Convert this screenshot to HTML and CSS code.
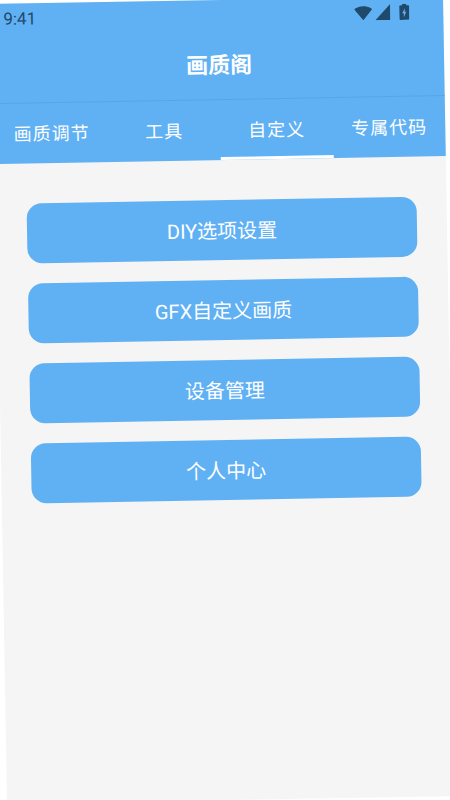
FILE: index.html
```html
<!DOCTYPE html>
<html lang="zh-CN">
<head>
	<meta charset="UTF-8">
	<title>画质阁</title>
	<link rel="stylesheet" href="styles.css">
</head>
<body>
	<div class="screen">
		<div class="header">
			<div class="status-bar">
				<span class="time">9:41</span>
				<div class="status-icons">
					<svg class="icon-wifi" viewBox="0 0 24 19" aria-hidden="true"><path d="M12 19 24 4.5C23.5 4.1 19 .5 12 .5S.5 4.1 0 4.5z"/></svg>
					<svg class="icon-signal" viewBox="0 0 15 16" aria-hidden="true"><path d="M0 16h15V0z"/></svg>
					<svg class="icon-battery" viewBox="0 0 10 16" aria-hidden="true">
						<path d="M3 0h4v1.5h2c.6 0 1 .4 1 1V15c0 .6-.4 1-1 1H1c-.6 0-1-.4-1-1V2.500c0-.6.4-1 1-1h2z"/>
						<path class="bolt" d="M4.500 13.500V9.500H3L5.500 4.500V8H7z"/>
					</svg>
				</div>
			</div>
			<div class="toolbar">画质阁</div>
			<div class="tabs">
				<span class="tab">画质调节</span>
				<span class="tab">工具</span>
				<span class="tab active">自定义</span>
				<span class="tab">专属代码</span>
			</div>
		</div>
		<div class="menu">
			<div class="menu-btn">DIY选项设置</div>
			<div class="menu-btn">GFX自定义画质</div>
			<div class="menu-btn">设备管理</div>
			<div class="menu-btn">个人中心</div>
		</div>
	</div>
</body>
</html>
```

FILE: styles.css
```css
/*--reset--*/
html, body {
	margin: 0;
	height: 100%;
	overflow: hidden;
	background: #fff;
}

/* the whole capture sits about one degree off level */
.screen {
	width: 450px;
	height: 800px;
	background: #f5f5f5;
	color: #fff;
	font-family: Roboto, "Noto Sans CJK SC", sans-serif;
	transform: rotate(-1deg);
}

.header {
	background: #60b0f4;
}

.status-bar {
	height: 30px;
	padding: 0 34px 0 10px;
	display: flex;
	align-items: center;
	justify-content: space-between;
	color: #1f4a6c;
	font-size: 17px;
}
.status-icons {
	display: flex;
	align-items: center;
}
.status-icons svg {
	fill: #1f4a6c;
	display: block;
}
.icon-wifi {
	width: 18px;
	height: 15px;
}
.icon-signal {
	width: 15px;
	height: 16px;
	margin-left: 3px;
}
.icon-battery {
	width: 10px;
	height: 16px;
	margin-left: 9px;
}
.icon-battery .bolt {
	fill: #60b0f4;
}

.toolbar {
	height: 70px;
	display: flex;
	align-items: center;
	justify-content: center;
	padding-bottom: 3px;
	font-size: 22px;
	font-weight: bold;
	border-bottom: 1px solid #58a5e6;
	box-sizing: border-box;
}

.tabs {
	display: flex;
	height: 60px;
}
.tab {
	flex: 1;
	display: flex;
	align-items: center;
	justify-content: center;
	padding-bottom: 3px;
	font-size: 18px;
	letter-spacing: 1px;
	box-sizing: border-box;
}
.tab.active {
	border-bottom: 3px solid #fff;
	padding-bottom: 0;
}

.menu {
	padding: 40px 30px;
	display: flex;
	flex-direction: column;
	gap: 20px;
}
.menu-btn {
	height: 60px;
	padding-bottom: 2px;
	border-radius: 15px;
	background: #60b0f4;
	display: flex;
	align-items: center;
	justify-content: center;
	font-size: 20px;
	box-sizing: border-box;
}
```
